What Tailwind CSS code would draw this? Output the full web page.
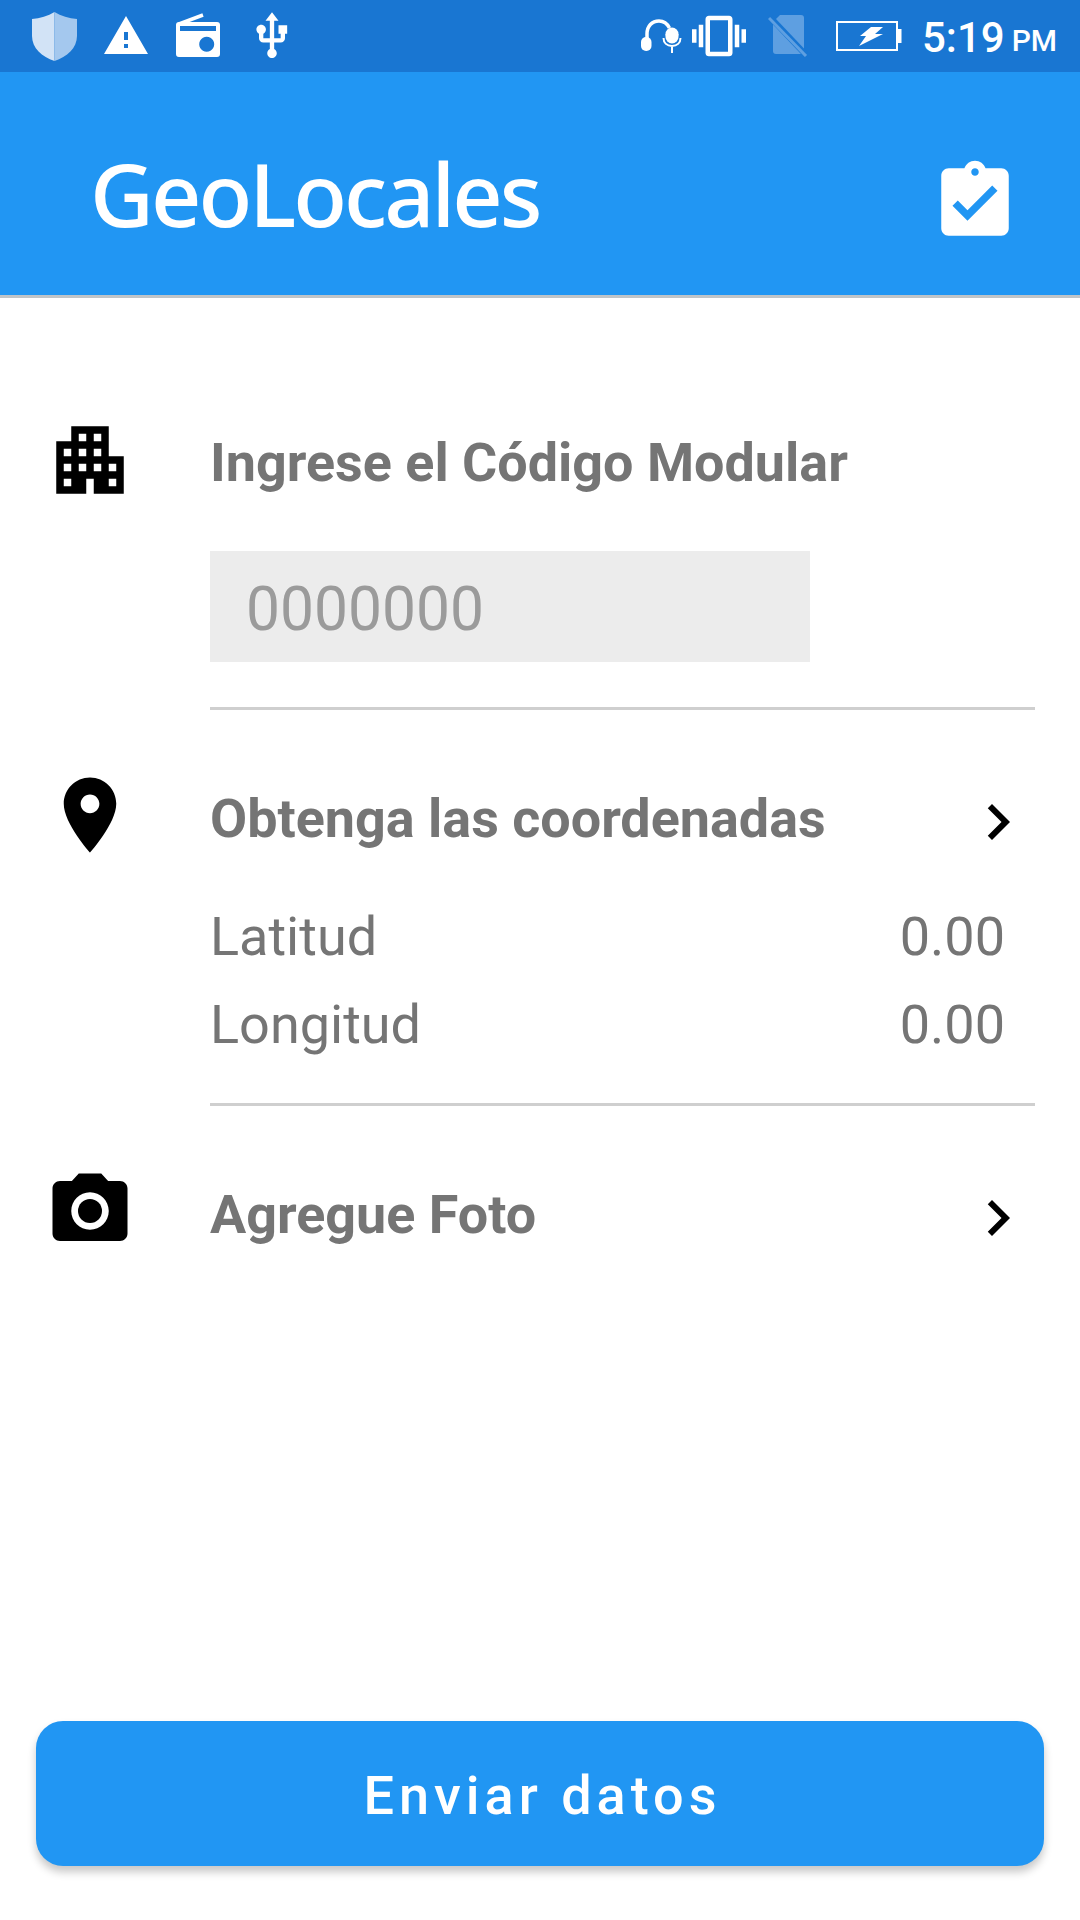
<!DOCTYPE html>
<html lang="es">
<head>
<meta charset="UTF-8">
<title>GeoLocales</title>
<script src="https://cdn.jsdelivr.net/npm/@tailwindcss/browser@4"></script>
</head>
<body class="bg-white font-['Roboto',sans-serif]">
<div class="w-[1080px] h-[1920px] flex flex-col overflow-hidden">

  <!-- status bar -->
  <div class="h-[72px] bg-[#1976d2] flex items-center text-white shrink-0">
    <svg class="ml-[32px] w-[45px] h-[49px]" viewBox="0 0 45 49"><path fill="#d2e3f6" d="M22.500 0 C16 4 8 6.500 0 7 V24 C0 36 10 45 22.500 49 Z"/><path fill="#a4c8ee" d="M22.500 0 C29 4 37 6.500 45 7 V24 C45 36 35 45 22.500 49 Z"/></svg>
    <svg class="ml-[25px] w-[48px] h-[48px]" viewBox="0 0 24 24" fill="#fff"><path d="M1 21h22L12 2 1 21zm12-3h-2v-2h2v2zm0-4h-2v-4h2v4z"/></svg>
    <svg class="ml-[24px] w-[48px] h-[48px]" viewBox="0 0 48 48"><path fill="#fff" fill-rule="evenodd" d="M5 10h38a3 3 0 0 1 3 3v29a3 3 0 0 1-3 3H5a3 3 0 0 1-3-3V13a3 3 0 0 1 3-3zM6 14v5h36v-5zM32.700 24.800a7.500 7.500 0 1 0 .01 0z"/><path stroke="#fff" stroke-width="3.500" d="M5 12 29 3"/></svg>
    <svg class="ml-[24px] w-[52px] h-[52px]" viewBox="0 0 24 24" fill="#fff"><path d="M15 7v4h1v2h-3V5h2l-3-4-3 4h2v8H8v-2.070c.7-.37 1.200-1.080 1.200-1.930 0-1.210-.99-2.200-2.200-2.200-1.210 0-2.200.99-2.200 2.200 0 .85.5 1.560 1.200 1.930V13c0 1.110.89 2 2 2h3v3.050c-.71.37-1.200 1.100-1.200 1.950 0 1.220.99 2.200 2.200 2.200 1.210 0 2.200-.98 2.200-2.200 0-.85-.49-1.580-1.200-1.950V15h3c1.110 0 2-.89 2-2v-2h1V7h-4z"/></svg>

    <svg class="ml-[343px] w-[42px] h-[34px]" viewBox="0 0 42 34"><path fill="none" stroke="#fff" stroke-width="3.500" d="M6 22V15C6 7 11 2 18 2c4 0 8 2 10.500 7"/><rect x="0" y="18" width="10.500" height="14" rx="5" fill="#fff"/><circle cx="31" cy="15" r="6.500" fill="#fff"/><path fill="#fff" d="M24.500 15h13v3a6.500 6.500 0 0 1-13 0z"/><path fill="none" stroke="#fff" stroke-width="2" d="M22.500 19c0 5 3.500 8 8.500 8s8.500-3 8.500-8M31 27v7"/></svg>
    <svg class="ml-[9px] w-[54px] h-[54px]" viewBox="0 0 24 24" fill="#fff"><path d="M0 15h2V9H0v6zm3 2h2V7H3v10zm19-8v6h2V9h-2zm-3 8h2V7h-2v10zM16.500 3h-9C6.670 3 6 3.670 6 4.500v15c0 .83.67 1.500 1.500 1.500h9c.83 0 1.500-.67 1.500-1.500v-15c0-.83-.67-1.500-1.500-1.500zM16 19H8V5h8v14z"/></svg>
    <svg class="ml-[22px] w-[40px] h-[42px]" viewBox="0 0 40 42"><path fill="#5e9fe1" d="M12 0h21a3 3 0 0 1 3 3v33a3 3 0 0 1-3 3H8a3 3 0 0 1-3-3V7z"/><path stroke="#1976d2" stroke-width="6" d="M1 1 39 41"/><path stroke="#5e9fe1" stroke-width="3" d="M1 3 38 41"/></svg>
    <svg class="ml-[28px] w-[66px] h-[30px]" viewBox="0 0 66 30"><rect x="1" y="1" width="60" height="28" fill="none" stroke="#fff" stroke-width="2"/><rect x="62" y="8" width="3.500" height="14" fill="#fff"/><path fill="#fff" d="M24 15 35 6h12l-8 7h8L23 25l7-10z"/></svg>
    <span class="ml-[20px] text-[42px] leading-none font-medium mt-[3px]">5:19</span>
    <span class="ml-[7px] text-[30px] leading-none font-medium mt-[10px]">PM</span>
  </div>

  <!-- app bar -->
  <div class="h-[226px] bg-[#2196f3] border-b-[3px] border-[#bfc4c8] flex items-center justify-between pl-[90px] pr-[60px] shrink-0">
    <h1 class="text-[88px] leading-none text-white font-medium font-['Noto_Sans',sans-serif] tracking-[-3px] mt-[18px]">GeoLocales</h1>
    <svg class="w-[90px] h-[90px] mt-[37px]" viewBox="0 0 24 24" fill="#fff"><path d="M19 3h-4.180C14.400 1.840 13.300 1 12 1c-1.300 0-2.400.84-2.820 2H5c-1.100 0-2 .9-2 2v14c0 1.100.9 2 2 2h14c1.100 0 2-.9 2-2V5c0-1.100-.9-2-2-2zm-7 0c.55 0 1 .45 1 1s-.45 1-1 1-1-.45-1-1 .45-1 1-1zm-2 14l-4-4 1.410-1.410L10 14.170l6.590-6.590L18 9l-8 8z"/></svg>
  </div>

  <!-- form -->
  <div class="flex-1 flex flex-col text-[#757575]">
    <section class="flex pt-[117px]">
      <div class="w-[210px] pl-[45px] shrink-0">
        <svg class="w-[90px] h-[90px]" viewBox="0 0 24 24" fill="#000"><path d="M17 11V3H7v4H3v14h8v-4h2v4h8V11h-4zM7 19H5v-2h2v2zm0-4H5v-2h2v2zm0-4H5V9h2v2zm4 4H9v-2h2v2zm0-4H9V9h2v2zm0-4H9V5h2v2zm4 8h-2v-2h2v2zm0-4h-2V9h2v2zm0-4h-2V5h2v2zm4 12h-2v-2h2v2zm0-4h-2v-2h2v2z"/></svg>
      </div>
      <div class="flex-1 mr-[45px] border-b-[3px] border-[#cfcfcf] h-[295px]">
        <h2 class="text-[53.900px] leading-[96px] font-bold">Ingrese el Código Modular</h2>
        <div class="mt-[40px] w-[600px] h-[111px] bg-[#ececec] flex items-center pl-[36px] pt-[7px] text-[60.500px] text-[#9b9b9b]">0000000</div>
      </div>
    </section>

    <section class="flex pt-[54px]">
      <div class="w-[210px] pl-[45px] shrink-0">
        <svg class="w-[90px] h-[90px] mt-[6px]" viewBox="0 0 24 24" fill="#000"><path d="M12 2C8.130 2 5 5.130 5 9c0 5.250 7 13 7 13s7-7.750 7-13c0-3.870-3.130-7-7-7zm0 9.500c-1.380 0-2.500-1.120-2.500-2.500s1.120-2.500 2.500-2.500 2.500 1.120 2.500 2.500-1.120 2.500-2.500 2.500z"/></svg>
      </div>
      <div class="flex-1 mr-[45px] border-b-[3px] border-[#cfcfcf] h-[342px]">
        <div class="flex items-center justify-between h-[72px] mt-[22px]">
          <h2 class="text-[53.900px] leading-none font-bold pb-[6px]">Obtenga las coordenadas</h2>
          <svg class="w-[72px] h-[72px] mr-[1px]" viewBox="0 0 24 24" fill="#000"><path d="M10 6L8.590 7.410 13.170 12l-4.580 4.590L10 18l6-6z"/></svg>
        </div>
        <div class="mt-[35px] flex justify-between pr-[30px] text-[54px] leading-[88px]"><span>Latitud</span><span>0.00</span></div>
        <div class="flex justify-between pr-[30px] text-[54px] leading-[88px]"><span>Longitud</span><span>0.00</span></div>
      </div>
    </section>

    <section class="flex pt-[58px]">
      <div class="w-[210px] pl-[45px] shrink-0">
        <svg class="w-[90px] h-[90px] mt-[2px]" viewBox="0 0 24 24" fill="#000"><circle cx="12" cy="12" r="3.200"/><path d="M9 2L7.170 4H4c-1.100 0-2 .9-2 2v12c0 1.100.9 2 2 2h16c1.100 0 2-.9 2-2V6c0-1.100-.9-2-2-2h-3.170L15 2H9zm3 15c-2.760 0-5-2.240-5-5s2.240-5 5-5 5 2.240 5 5-2.240 5-5 5z"/></svg>
      </div>
      <div class="flex-1 mr-[45px]">
        <div class="flex items-center justify-between h-[72px] mt-[18px]">
          <h2 class="text-[53.900px] leading-none font-bold pb-[6px]">Agregue Foto</h2>
          <svg class="w-[72px] h-[72px] mr-[1px]" viewBox="0 0 24 24" fill="#000"><path d="M10 6L8.590 7.410 13.170 12l-4.580 4.590L10 18l6-6z"/></svg>
        </div>
      </div>
    </section>

    <div class="mt-auto px-[36px] pb-[54px]">
      <button class="w-full h-[145px] pt-[4px] pl-[5px] bg-[#2196f3] rounded-[27px] shadow-[0_6px_8px_rgba(0,0,0,0.22)] text-white text-[54px] font-medium tracking-[5px]">Enviar datos</button>
    </div>
  </div>
</div>
</body>
</html>
